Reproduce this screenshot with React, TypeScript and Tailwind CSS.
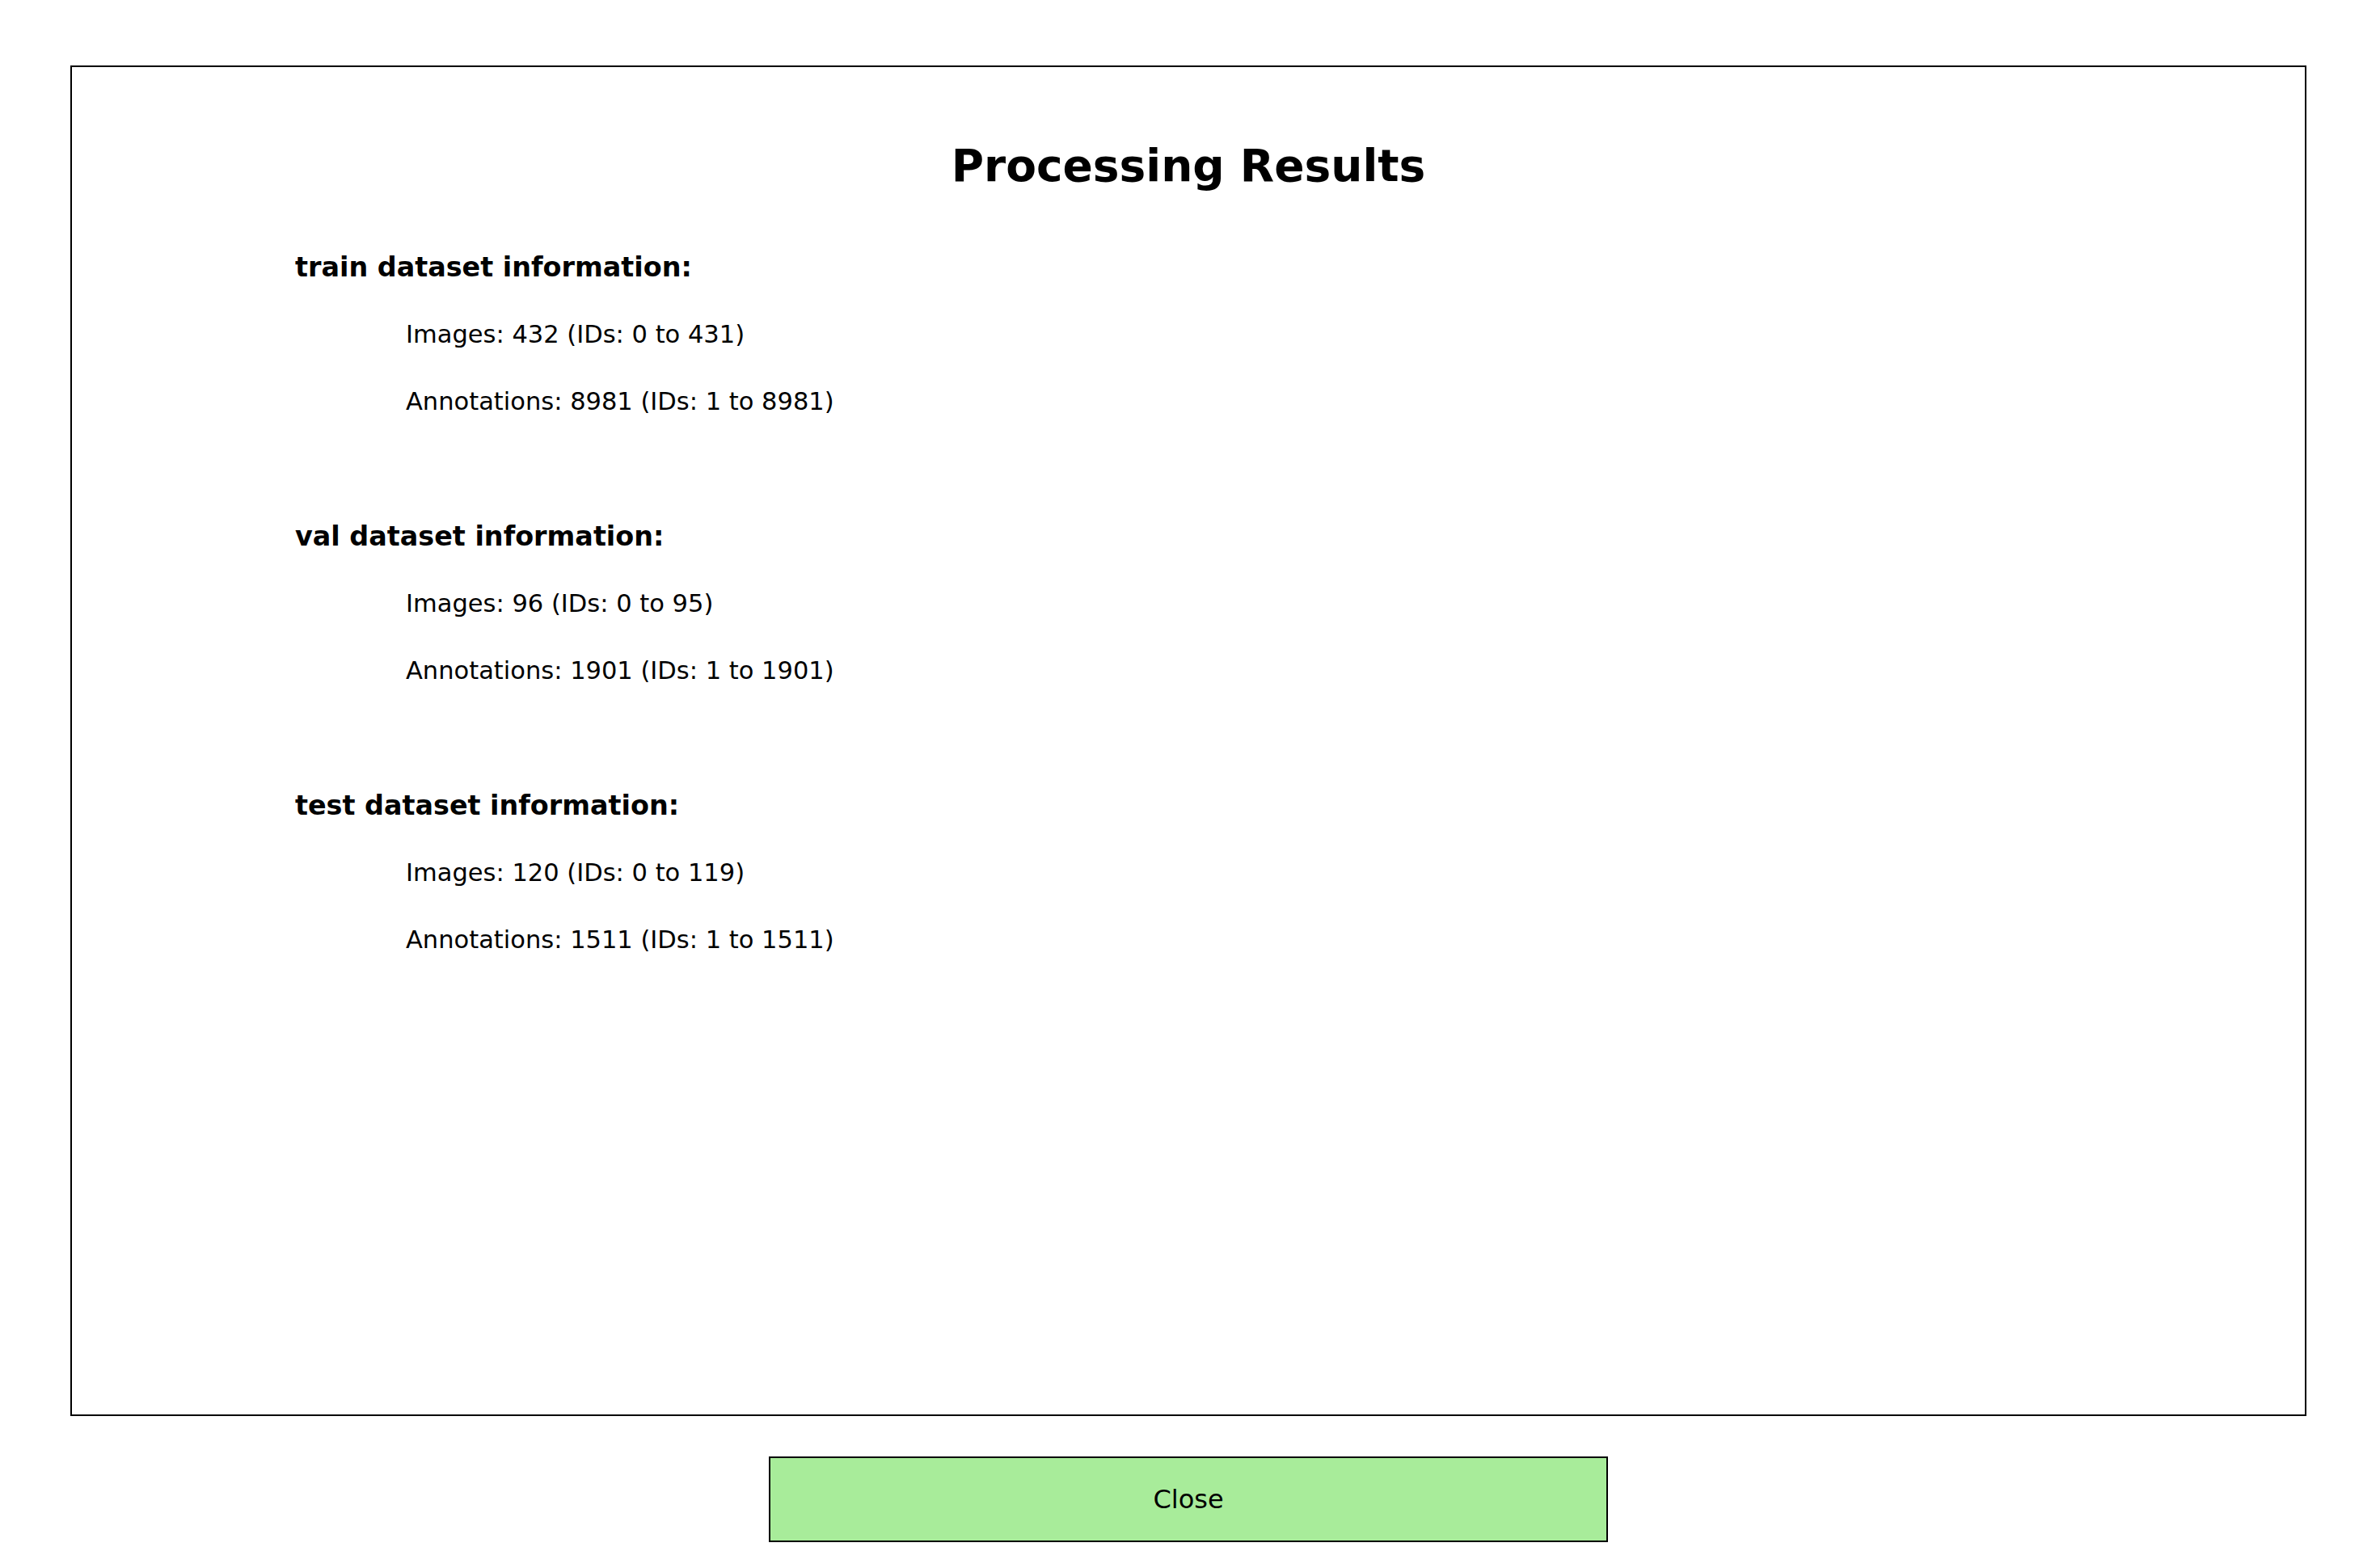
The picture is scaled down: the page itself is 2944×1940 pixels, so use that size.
const datasets = [
  { name: "train", images: 432, annotations: 8981 },
  { name: "val", images: 96, annotations: 1901 },
  { name: "test", images: 120, annotations: 1511 },
];

export default function App() {
  return (
    <div className="h-[1940px] w-[2944px] bg-white font-['DejaVu_Sans',sans-serif] text-black">
      <div className="ml-[87px] flex w-[2766px] flex-col items-center pt-[81px]">
        <div className="box-border h-[1671px] w-full border-2 border-black">
          <h1 className="mt-[94px] text-center text-[55px] font-bold leading-[56px]">
            Processing Results
          </h1>

          <div className="mt-[56px] pl-[276px]">
            {datasets.map((d, i) => (
              <div key={d.name} className={i > 0 ? "mt-[83.2px]" : ""}>
                <p className="text-[33.4px] font-bold leading-[83.2px]">
                  {d.name} dataset information:
                </p>
                <p className="pl-[137px] text-[30.5px] leading-[83.2px]">
                  Images: {d.images} (IDs: 0 to {d.images - 1})
                </p>
                <p className="pl-[137px] text-[30.5px] leading-[83.2px]">
                  Annotations: {d.annotations} (IDs: 1 to {d.annotations})
                </p>
              </div>
            ))}
          </div>
        </div>

        <button
          type="button"
          className="mt-[50px] box-border h-[106px] w-[1038px] border-2 border-black bg-[#a8ec9a] text-[32px] leading-none"
        >
          Close
        </button>
      </div>
    </div>
  );
}
